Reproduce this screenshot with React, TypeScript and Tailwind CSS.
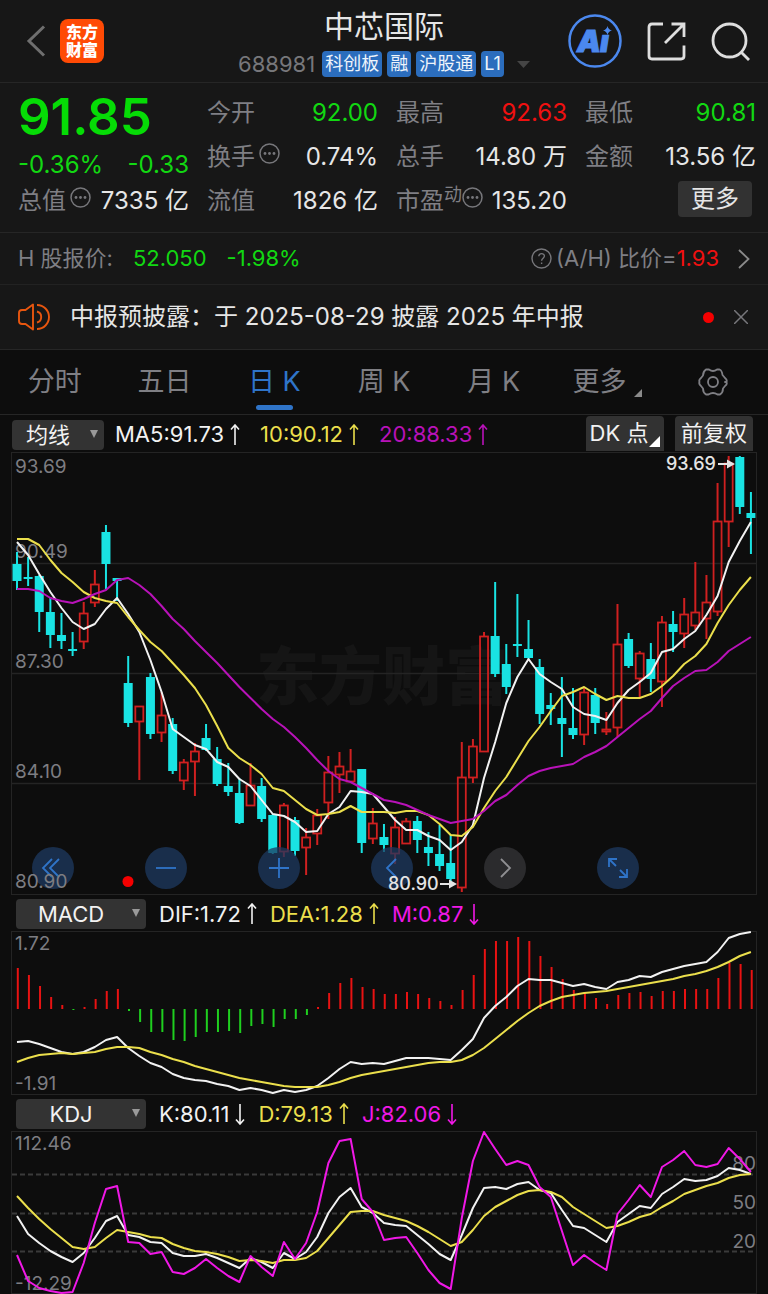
import type { ReactNode } from "react";

type Candle = {
  high: number;
  top: number;
  bottom: number;
  low: number;
  up: boolean;
};

const CYAN = "#19e3e3";
const RED = "#cf2020";
const WHITE = "#f2f2f2";
const YELLOW = "#ebdf4c";
const PURPLE = "#b812b8";
const PINK = "#f018e6";
const LABEL = "#7d7d82";
const GRID = "#242424";

const STEP = 11.12;
const xAt = (index: number) => 17 + STEP * index;

const toPoints = (values: number[]) =>
  values.map((y, index) => `${xAt(index).toFixed(1)},${y}`).join(" ");

// high, body top, body bottom, low, 1 = rising day
const candles: Candle[] = [
  [552, 564, 581, 590, 0], [557, 577, 579, 586, 0], [575, 576, 612, 632, 0],
  [597, 612, 635, 648, 0], [613, 635, 641, 649, 0], [632, 649, 651, 656, 0],
  [602, 613, 642, 649, 1], [570, 584, 603, 607, 1], [525, 532, 564, 589, 0],
  [578, 578, 581, 601, 0], [656, 683, 723, 727, 0], [706, 706, 722, 780, 1],
  [673, 677, 734, 739, 0], [692, 715, 733, 742, 1], [718, 724, 771, 774, 0],
  [759, 762, 781, 790, 1], [743, 751, 762, 796, 1], [724, 738, 750, 751, 0],
  [747, 759, 784, 786, 0], [763, 786, 792, 796, 0], [778, 793, 823, 824, 0],
  [763, 785, 806, 806, 1], [778, 786, 819, 822, 0], [814, 815, 853, 854, 0],
  [803, 805, 852, 857, 1], [817, 820, 851, 856, 0], [828, 837, 848, 875, 1],
  [809, 815, 834, 845, 1], [756, 772, 803, 819, 1], [752, 766, 775, 793, 1],
  [749, 771, 782, 782, 1], [769, 769, 843, 853, 0], [808, 823, 839, 844, 1],
  [824, 837, 845, 852, 0], [817, 827, 854, 864, 1], [818, 821, 844, 844, 1],
  [816, 821, 840, 853, 0], [832, 847, 853, 866, 0], [825, 854, 866, 871, 0],
  [835, 863, 879, 881, 0], [742, 777, 888, 892, 1], [739, 746, 778, 783, 1],
  [632, 636, 752, 752, 1], [582, 636, 674, 677, 0], [644, 664, 687, 694, 0],
  [594, 644, 646, 657, 0], [620, 649, 658, 659, 0], [659, 667, 714, 724, 0],
  [693, 705, 709, 725, 0], [677, 718, 724, 757, 0], [688, 728, 735, 739, 0],
  [688, 692, 735, 745, 1], [688, 695, 723, 734, 0], [712, 729, 732, 735, 1],
  [604, 644, 728, 737, 1], [633, 639, 666, 668, 0], [651, 653, 679, 697, 1],
  [643, 659, 679, 692, 0], [616, 622, 682, 707, 1], [611, 624, 632, 652, 0],
  [598, 614, 634, 648, 1], [562, 612, 626, 630, 1], [575, 602, 619, 639, 1],
  [483, 521, 612, 616, 1], [456, 463, 522, 547, 1], [456, 457, 507, 514, 0],
  [492, 513, 518, 554, 0],
].map(([high, top, bottom, low, up]) => ({ high, top, bottom, low, up: up === 1 }));

const ma5 = [
  542, 555, 574, 592, 608, 622, 629, 624, 609, 598, 614, 632, 660, 692, 729, 737, 745, 749, 762, 767,
  779, 786, 800, 814, 816, 822, 832, 831, 814, 807, 791, 792, 794, 807, 820, 830, 830, 836, 840, 850,
  842, 825, 778, 742, 703, 677, 659, 674, 682, 689, 707, 714, 716, 720, 703, 690, 682, 673, 652, 649,
  639, 631, 615, 596, 562, 541, 522,
];

const ma10 = [
  539, 539, 545, 560, 573, 582, 592, 598, 601, 603, 617, 630, 642, 651, 663, 675, 688, 705, 726, 748,
  758, 765, 774, 788, 791, 800, 809, 815, 814, 812, 806, 812, 812, 812, 813, 811, 811, 815, 824, 835,
  836, 827, 808, 791, 777, 759, 741, 727, 711, 696, 692, 687, 694, 700, 696, 698, 698, 694, 686, 676,
  664, 656, 644, 623, 605, 590, 577,
];

const ma20 = [
  589, 589, 591, 598, 601, 603, 599, 594, 590, 580, 578, 585, 594, 606, 619, 629, 641, 652, 663, 675,
  687, 698, 709, 719, 727, 737, 748, 760, 771, 779, 782, 788, 794, 800, 802, 805, 810, 815, 819, 823,
  821, 819, 811, 801, 795, 785, 776, 771, 768, 766, 764, 757, 752, 746, 737, 728, 719, 711, 698, 686,
  678, 671, 670, 662, 651, 644, 637,
];

const MACD_ZERO = 1009;

const macdBars = [
  968, 975, 986, 997, 1005, 1010, 1007, 999, 991, 989, 1011, 1022, 1032, 1032, 1040, 1041, 1037, 1032,
  1032, 1031, 1033, 1026, 1024, 1027, 1019, 1019, 1015, 1007, 993, 983, 978, 987, 989, 994, 994, 992,
  994, 998, 1001, 1005, 990, 975, 949, 941, 941, 937, 941, 956, 967, 979, 990, 992, 998, 1004, 995,
  993, 992, 996, 991, 991, 989, 989, 989, 978, 963, 964, 970,
];

const dif = [
  1042, 1041, 1044, 1048, 1052, 1054, 1052, 1047, 1040, 1037, 1048, 1056, 1063, 1067, 1074, 1078, 1080,
  1081, 1084, 1086, 1090, 1088, 1090, 1093, 1090, 1092, 1090, 1086, 1078, 1069, 1062, 1064, 1063, 1064,
  1061, 1058, 1058, 1058, 1059, 1060, 1050, 1039, 1018, 1006, 997, 986, 979, 980, 980, 983, 986, 984,
  987, 989, 982, 980, 976, 977, 972, 969, 966, 964, 962, 952, 938, 934, 932,
];

const dea = [
  1062, 1058, 1055, 1054, 1053, 1054, 1053, 1052, 1049, 1047, 1047, 1048, 1052, 1055, 1059, 1062, 1066,
  1069, 1072, 1075, 1078, 1080, 1082, 1084, 1086, 1087, 1087, 1087, 1085, 1082, 1078, 1075, 1073, 1071,
  1069, 1067, 1065, 1063, 1062, 1062, 1060, 1055, 1048, 1039, 1030, 1021, 1013, 1006, 1001, 997, 995,
  993, 992, 991, 989, 987, 985, 983, 981, 979, 976, 974, 971, 967, 962, 956, 952,
];

const kLine = [
  1216, 1234, 1243, 1251, 1257, 1262, 1253, 1238, 1221, 1216, 1235, 1237, 1242, 1243, 1253, 1256, 1256,
  1254, 1258, 1263, 1268, 1258, 1262, 1268, 1253, 1259, 1252, 1237, 1213, 1197, 1188, 1207, 1213, 1223,
  1225, 1226, 1235, 1244, 1254, 1260, 1235, 1208, 1188, 1187, 1189, 1184, 1182, 1190, 1193, 1210, 1226,
  1228, 1235, 1242, 1222, 1214, 1206, 1208, 1194, 1187, 1179, 1181, 1180, 1176, 1168, 1170, 1174,
];

const dLine = [
  1196, 1208, 1219, 1229, 1238, 1247, 1249, 1247, 1238, 1230, 1232, 1234, 1237, 1238, 1244, 1248, 1251,
  1252, 1254, 1257, 1261, 1260, 1261, 1263, 1260, 1260, 1258, 1251, 1238, 1225, 1212, 1211, 1211, 1215,
  1218, 1221, 1226, 1232, 1239, 1246, 1242, 1230, 1216, 1207, 1201, 1195, 1191, 1190, 1192, 1197, 1207,
  1214, 1221, 1228, 1226, 1222, 1217, 1214, 1207, 1201, 1194, 1190, 1186, 1183, 1178, 1175, 1174,
];

const jLine = [
  1255, 1281, 1288, 1291, 1293, 1292, 1263, 1223, 1189, 1186, 1242, 1243, 1254, 1252, 1272, 1274, 1268,
  1259, 1268, 1276, 1282, 1256, 1267, 1276, 1242, 1259, 1243, 1212, 1163, 1141, 1139, 1199, 1212, 1240,
  1238, 1237, 1253, 1270, 1283, 1289, 1218, 1161, 1132, 1149, 1165, 1161, 1165, 1187, 1197, 1231, 1265,
  1255, 1263, 1270, 1214, 1200, 1185, 1197, 1167, 1160, 1151, 1165, 1167, 1164, 1148, 1159, 1172,
];

const Line = ({ values, color }: { values: number[]; color: string }) => (
  <polyline points={toPoints(values)} fill="none" stroke={color} strokeWidth="2" strokeLinejoin="round" />
);

const AxisText = ({ x = 15, y, end, children }: { x?: number; y: number; end?: boolean; children: string }) => (
  <text x={x} y={y} fill={LABEL} fontSize="19" textAnchor={end ? "end" : "start"}>
    {children}
  </text>
);

const MoreDots = () => (
  <svg className="h-[21px] w-[21px] shrink-0" viewBox="0 0 21 21" fill="none" stroke="#77777b" strokeWidth="1.5">
    <circle cx="10.5" cy="10.5" r="9.5" />
    <g fill="#77777b" stroke="none">
      <circle cx="6" cy="10.5" r="1.4" />
      <circle cx="10.5" cy="10.5" r="1.4" />
      <circle cx="15" cy="10.5" r="1.4" />
    </g>
  </svg>
);

const Arrow = ({ down }: { down?: boolean }) => (
  <svg className="h-[22px] w-[10px] shrink-0" viewBox="0 0 10 22" fill="none" stroke="currentColor" strokeWidth="1.6">
    {down ? <path d="M5 1v20M1 16.500l4 4.500 4-4.500" /> : <path d="M5 21V1M1 5.500l4-4.500 4 4.500" />}
  </svg>
);

const Indicator = ({ color, down, children }: { color: string; down?: boolean; children: string }) => (
  <span className={`flex items-center gap-1.5 pt-0.5 ${color}`}>
    {children}
    <Arrow down={down} />
  </span>
);

const Picker = ({ label, name, width }: { label: string; name: string; width: string }) => (
  <div className={`relative h-[30px] shrink-0 ${width}`}>
    <select
      aria-label={name}
      className="h-full w-full appearance-none rounded bg-[#333333] pr-5 text-center text-[22px] leading-[30px] text-[#f2f2f2] [text-align-last:center]"
    >
      <option>{label}</option>
    </select>
    <svg className="pointer-events-none absolute right-1.5 top-[11px] h-2 w-2" viewBox="0 0 8 8">
      <path d="M0 0h8L4 8z" fill="#9a9a9a" />
    </svg>
  </div>
);

const Cell = ({
  label,
  value,
  color = "text-[#e6e6e6]",
  children,
}: {
  label: string;
  value: string;
  color?: string;
  children?: ReactNode;
}) => (
  <div className="flex h-11 items-center justify-between whitespace-nowrap">
    <span className="flex items-center text-[#7f7f84]">
      {label}
      {children}
    </span>
    <span className={color}>{value}</span>
  </div>
);

const Badge = ({ children }: { children: string }) => (
  <span className="rounded-sm bg-[#2b6dbd] px-[3px]">{children}</span>
);

const Header = () => (
  <header className="grid h-[83px] grid-cols-[1fr_auto_1fr] items-center border-b border-[#262626] px-[18px]">
    <div className="flex items-center gap-[14px] pl-2">
      <button aria-label="返回">
        <svg className="h-8 w-5" viewBox="0 0 20 32" fill="none" stroke="#6f6f6f" strokeWidth="3">
          <path d="M18 1.500 3 16l15 14.500" />
        </svg>
      </button>
      <div className="flex h-11 w-11 flex-col items-center justify-center rounded-lg bg-[#ff4a05] text-base font-black leading-[18px] text-white">
        <span>东方</span>
        <span>财富</span>
      </div>
    </div>
    <div className="flex flex-col items-center">
      <h1 className="text-[30px] leading-[42px] text-[#e6e6e6]">中芯国际</h1>
      <div className="mt-1 flex items-center gap-[5px] text-lg leading-[26px] text-[#eef4fb]">
        <span className="mr-0.5 text-[22px] text-[#77777b]">688981</span>
        <Badge>科创板</Badge>
        <Badge>融</Badge>
        <Badge>沪股通</Badge>
        <Badge>L1</Badge>
        <svg className="ml-2 h-[7px] w-[13px]" viewBox="0 0 13 7">
          <path d="M0 0h13L6.500 7z" fill="#454545" />
        </svg>
      </div>
    </div>
    <div className="flex items-center justify-end gap-[25px]">
      <button aria-label="AI 助手">
        <svg className="h-[54px] w-[54px]" viewBox="0 0 54 54">
          <circle cx="27" cy="27" r="25.500" fill="none" stroke="#4b88ee" strokeWidth="2.500" />
          <g fill="#4b88ee" stroke="#4b88ee" fontSize="30" fontWeight="900" fontStyle="italic">
            <text x="9" y="37.500">
              A
            </text>
            <text x="32" y="37.500">
              i
            </text>
          </g>
          <path d="M32.500 12H45v8.500H32.500z" fill="#171717" />
          <path d="M39.500 12q.9 3.600 4.500 4.500-3.600.9-4.500 4.500-.9-3.600-4.500-4.500 3.600-.9 4.500-4.500z" fill="#4b88ee" />
        </svg>
      </button>
      <button aria-label="分享">
        <svg className="h-10 w-[39px]" viewBox="0 0 39 40" fill="none" stroke="#dedede" strokeWidth="2.800">
          <path d="M16 3H5Q2 3 2 6v29q0 3 3 3h29q3 0 3-3V24.500" />
          <path d="M24.500 3H37v13M37 3 18 22" />
        </svg>
      </button>
      <button aria-label="搜索">
        <svg className="h-[39px] w-[39px]" viewBox="0 0 39 39" fill="none" stroke="#dedede" strokeWidth="2.800">
          <circle cx="18.500" cy="18.500" r="16.500" />
          <path d="m30 30 8 8" />
        </svg>
      </button>
    </div>
  </header>
);

const Quote = () => (
  <section className="grid h-[150px] grid-cols-4 gap-x-[18px] border-b border-[#262626] pl-[18px] pr-3 pt-2 text-2xl">
    <div>
      <div className="h-[51px] text-[51px] font-semibold leading-[51px] text-[#06dc06]">91.85</div>
      <div className="flex h-[37px] items-center justify-between pt-2 text-[#12d812]">
        <span>-0.36%</span>
        <span>-0.33</span>
      </div>
      <Cell label="总值" value="7335 亿">
        <span className="-mt-2 ml-1">
          <MoreDots />
        </span>
      </Cell>
    </div>
    <div>
      <Cell label="今开" value="92.00" color="text-[#12d812]" />
      <Cell label="换手" value="0.74%">
        <span className="-mt-2 ml-1">
          <MoreDots />
        </span>
      </Cell>
      <Cell label="流值" value="1826 亿" />
    </div>
    <div>
      <Cell label="最高" value="92.63" color="text-[#f01010]" />
      <Cell label="总手" value="14.80 万" />
      <Cell label="市盈" value="135.20">
        <span className="-mt-3 text-lg leading-none">动</span>
        <span className="-mt-2">
          <MoreDots />
        </span>
      </Cell>
    </div>
    <div>
      <Cell label="最低" value="90.81" color="text-[#12d812]" />
      <Cell label="金额" value="13.56 亿" />
      <div className="flex justify-end pr-1 pt-0.5">
        <button className="h-9 rounded bg-[#323232] px-[13px] leading-9 text-[#e6e6e6]">更多</button>
      </div>
    </div>
  </section>
);

const HShareRow = () => (
  <a href="#h-share" className="flex h-[52px] items-center border-b border-[#222222] px-[18px] text-[22px] text-[#7f7f84]">
    <span>H 股报价:</span>
    <span className="ml-5 text-[#12d812]">52.050</span>
    <span className="ml-5 text-[#12d812]">-1.98%</span>
    <svg className="ml-auto mr-1 h-[21px] w-[21px]" viewBox="0 0 21 21" fill="none" stroke="#77777b" strokeWidth="1.400">
      <circle cx="10.500" cy="10.500" r="9.500" />
      <path d="M7.800 8.300c0-3.700 5.600-3.500 5.600-.2 0 2-2.800 2.200-2.800 4.700M10.600 14.500v1.500" />
    </svg>
    <span>(A/H) 比价=</span>
    <span className="text-[#f01010]">1.93</span>
    <svg className="ml-[19px] h-5 w-3" viewBox="0 0 12 20" fill="none" stroke="#8a8a8a" strokeWidth="1.800">
      <path d="m1 1 9.500 9L1 19" />
    </svg>
  </a>
);

const Notice = () => (
  <div className="flex h-[65px] items-center border-b border-[#262626] px-[18px] text-2xl text-[#e6e6e6]">
    <svg className="mr-5 h-7 w-8 shrink-0" viewBox="0 0 32 28" fill="none" stroke="#e8560f" strokeWidth="1.900">
      <path d="M15 1.500v25L7.500 21H4q-3 0-3-3v-8q0-3 3-3h3.500z" strokeLinejoin="round" />
      <path d="M19 8.500a5.700 5.700 0 0 1 0 11M19 2a12 12 0 0 1 0 24" />
    </svg>
    <p className="whitespace-nowrap">中报预披露：于 2025-08-29 披露 2025 年中报</p>
    <span className="ml-auto h-[11px] w-[11px] rounded-full bg-[#f50000]" />
    <button aria-label="关闭" className="ml-5 mr-0.5">
      <svg className="h-[14px] w-[14px]" viewBox="0 0 14 14" stroke="#77777b" strokeWidth="1.500">
        <path d="m0 0 14 14M14 0 0 14" />
      </svg>
    </button>
  </div>
);

const tabs = ["分时", "五日", "日 K", "周 K", "月 K", "更多"];

const Tabs = () => (
  <nav className="grid h-[65px] grid-cols-7 border-b border-[#262626] text-[27px] text-[#7f7f84]">
    {tabs.map((tab) => (
      <button
        key={tab}
        className={`relative flex items-center justify-center ${tab === "日 K" ? "text-[#2f74c8]" : ""} ${tab === "更多" ? "pr-2" : ""}`}
      >
        {tab}
        {tab === "日 K" && <span className="absolute bottom-1 h-[5px] w-[37px] rounded-full bg-[#2f74c8]" />}
        {tab === "更多" && (
          <svg className="absolute bottom-[17px] right-4 h-2 w-2" viewBox="0 0 8 8">
            <path d="M8 0v8H0z" fill="#8a8a8a" />
          </svg>
        )}
      </button>
    ))}
    <button aria-label="设置" className="flex items-center justify-center">
      <svg className="h-[30px] w-[30px]" viewBox="0 0 30 30" fill="none" stroke="#7f7f84" strokeWidth="1.800">
        <path
          d="M11 2.500Q15 5.500 19 2.500L21.500 2.500Q24 3.500 24.500 8L27 11Q29.500 13 28.500 15Q25.500 15 28.500 15Q29.500 17.500 27 19L25 21.500Q25 25.500 22 27.500L19.500 27.500Q15 24.500 10.500 27.500L8 27.500Q5 25.500 5 21.500L3 19Q0.500 17 1.500 15Q0.500 13 3 11L5 8.500Q5 4.500 8 2.500Z"
          strokeLinejoin="round"
        />
        <circle cx="15" cy="15" r="5" />
      </svg>
    </button>
  </nav>
);

const controls = [
  { name: "最早", path: "M20 12 11 21l9 9M27 12l-9 9 9 9" },
  { name: "缩小", path: "M11 21h20" },
  { name: "放大", path: "M11 21h20M21 11v20" },
  { name: "左移", path: "M25 12l-9 9 9 9" },
  { name: "右移", path: "M17 12l9 9-9 9", muted: true },
  { name: "全屏", path: "M12 20v-8h8M12 12l7 7M30 22v8h-8M30 30l-7-7" },
];

const PriceChart = () => (
  <section className="relative px-[11px]">
    <svg className="block h-auto w-full" viewBox="11 452 746 443">
      <text x="256" y="699" fontSize="63" fontWeight="900" fill="#151515">
        东方财富
      </text>
      <rect x="11.5" y="452.5" width="745" height="442" fill="none" stroke={GRID} />
      {[563.5, 673.5, 783.5].map((y) => (
        <line key={y} x1="12" x2="756" y1={y} y2={y} stroke={GRID} strokeWidth="1.5" />
      ))}
      <AxisText y={473}>93.69</AxisText>
      <AxisText y={558}>90.49</AxisText>
      <AxisText y={668}>87.30</AxisText>
      <AxisText y={778}>84.10</AxisText>
      {candles.map((c, index) => {
        const x = xAt(index);
        const color = c.up ? RED : CYAN;
        return (
          <g key={index} stroke={color}>
            <line x1={x} x2={x} y1={c.high} y2={c.top} strokeWidth="2" />
            <line x1={x} x2={x} y1={c.bottom} y2={c.low} strokeWidth="2" />
            {c.up ? (
              <rect x={x - 4} y={c.top + 0.5} width="8" height={c.bottom - c.top - 1} fill="none" strokeWidth="1.8" />
            ) : (
              <rect x={x - 4.5} y={c.top} width="9" height={c.bottom - c.top} fill={color} stroke="none" />
            )}
          </g>
        );
      })}
      <Line values={ma5} color={WHITE} />
      <Line values={ma10} color={YELLOW} />
      <Line values={ma20} color={PURPLE} />
      <circle cx="128" cy="881.500" r="5.500" fill="#f50000" />
    </svg>
    <div className="absolute bottom-1.5 left-8 flex gap-[71px]">
      {controls.map((control) => (
        <button
          key={control.name}
          aria-label={control.name}
          className={`h-[42px] w-[42px] rounded-full ${control.muted ? "bg-[#2f2f31]/90" : "bg-[#1d3a60]/75"}`}
        >
          <svg viewBox="0 0 42 42" fill="none" stroke={control.muted ? "#8f8f92" : "#2f74c8"} strokeWidth="1.800">
            <path d={control.path} />
          </svg>
        </button>
      ))}
    </div>
    {/* price marks stay readable above the round buttons */}
    <div className="pointer-events-none absolute inset-x-[11px] top-0">
      <svg className="block h-auto w-full" viewBox="11 452 746 443">
        <AxisText y={888}>80.90</AxisText>
        <g fill="#e4e4e4" fontSize="18" fontWeight="500">
          <text x="666" y="470">
            93.69
          </text>
          <text x="388" y="890">
            80.90
          </text>
          <path d="M718 463h9v-3.500l8 4.500-8 4.500v-3.500h-9z" />
          <path d="M440 883h9v-3.500l8 4.500-8 4.500v-3.500h-9z" />
        </g>
      </svg>
    </div>
  </section>
);

const MacdChart = () => (
  <section className="px-[11px]">
    <svg className="block h-auto w-full" viewBox="11 931 746 164">
      <rect x="11.5" y="931.5" width="745" height="163" fill="none" stroke={GRID} />
      <AxisText y={950}>1.72</AxisText>
      <AxisText y={1090}>-1.91</AxisText>
      {macdBars.map((y, index) => (
        <line
          key={index}
          x1={xAt(index) + 0.8}
          x2={xAt(index) + 0.8}
          y1={y}
          y2={MACD_ZERO}
          stroke={y > MACD_ZERO ? "#1fd01f" : "#e81212"}
          strokeWidth="2"
        />
      ))}
      <Line values={dif} color={WHITE} />
      <Line values={dea} color={YELLOW} />
    </svg>
  </section>
);

const KdjChart = () => (
  <section className="px-[11px]">
    <svg className="block h-auto w-full" viewBox="11 1131 746 163">
      <rect x="11.5" y="1131.5" width="745" height="162" fill="none" stroke={GRID} />
      {[1174.5, 1213.5, 1251.5].map((y) => (
        <line key={y} x1="12" x2="756" y1={y} y2={y} stroke="#3a3a3a" strokeWidth="1.800" strokeDasharray="5 3" />
      ))}
      <AxisText y={1150}>112.46</AxisText>
      <AxisText y={1290}>-12.29</AxisText>
      <AxisText x={756} y={1170} end>
        80
      </AxisText>
      <AxisText x={756} y={1209} end>
        50
      </AxisText>
      <AxisText x={756} y={1248} end>
        20
      </AxisText>
      <Line values={kLine} color={WHITE} />
      <Line values={dLine} color={YELLOW} />
      <Line values={jLine} color={PINK} />
    </svg>
  </section>
);

const App = () => (
  <div className="bg-[#0d0d0d] font-['Inter','Noto_Sans_CJK_SC',sans-serif]">
    <div className="bg-[#171717]">
      <Header />
      <Quote />
      <HShareRow />
      <Notice />
    </div>
    <Tabs />
    <div className="flex h-[37px] items-center whitespace-nowrap pl-3 pr-[15px] text-[22px]">
      <Picker label="均线" name="主图指标" width="w-[92px]" />
      <div className="ml-[11px] flex gap-5">
        <Indicator color="text-[#f2f2f2]">MA5:91.73</Indicator>
        <Indicator color="text-[#ebdf4c]">10:90.12</Indicator>
        <Indicator color="text-[#b812b8]">20:88.33</Indicator>
      </div>
      <button className="relative ml-auto h-[35px] w-[78px] rounded-t bg-[#323232] pr-3 text-[#f2f2f2]">
        DK 点
        <svg className="absolute bottom-1 right-1 h-[11px] w-[11px]" viewBox="0 0 11 11">
          <path d="M11 0v11H0z" fill="#fff" />
        </svg>
      </button>
      <button className="ml-[11px] h-[35px] w-[78px] rounded-t bg-[#323232] text-[#f2f2f2]">前复权</button>
    </div>
    <PriceChart />
    <div className="flex h-9 items-center gap-[13px] whitespace-nowrap pl-4 text-[22px]">
      <Picker label="MACD" name="副图指标一" width="w-[130px]" />
      <Indicator color="text-[#f2f2f2]">DIF:1.72</Indicator>
      <Indicator color="text-[#ebdf4c]">DEA:1.28</Indicator>
      <Indicator color="text-[#f018e6]" down>
        M:0.87
      </Indicator>
    </div>
    <MacdChart />
    <div className="flex h-9 items-center gap-[13px] whitespace-nowrap pl-4 text-[22px]">
      <Picker label="KDJ" name="副图指标二" width="w-[130px]" />
      <Indicator color="text-[#f2f2f2]" down>
        K:80.11
      </Indicator>
      <Indicator color="text-[#ebdf4c]">D:79.13</Indicator>
      <Indicator color="text-[#f018e6]" down>
        J:82.06
      </Indicator>
    </div>
    <KdjChart />
  </div>
);

export default App;
